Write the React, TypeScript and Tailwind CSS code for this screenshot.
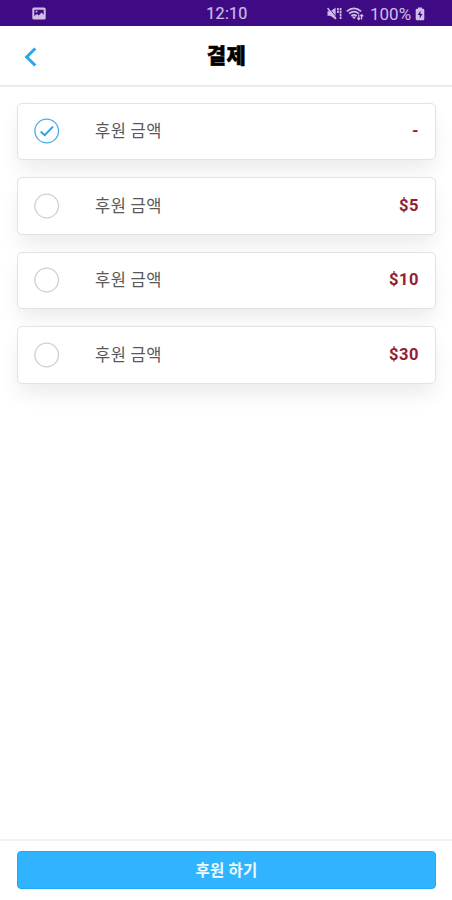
type Option = { id: number; amount: string; selected?: boolean };

const options: Option[] = [
  { id: 1, amount: '-', selected: true },
  { id: 2, amount: '$5' },
  { id: 3, amount: '$10' },
  { id: 4, amount: '$30' },
];

function StatusBar() {
  return (
    <div className="grid h-[25.5px] shrink-0 grid-cols-3 items-center bg-[#3f0b85] pt-[2px] text-[#cfbde6]">
      <svg className="ml-[32px]" width="14" height="13" viewBox="0 0 14 13">
        <rect x="0.3" y="0.5" width="13.4" height="12" rx="1.5" fill="currentColor" />
        <path d="M2.3 2.8h9.4v4.9L9.5 5.6 6.8 8.4 5 6.9 2.3 9Z" fill="#3f0b85" />
        <circle cx="4.5" cy="4.6" r="1" fill="currentColor" />
      </svg>
      <span className="pl-[2px] text-center font-['Roboto',sans-serif] text-[16px] leading-[22px] tracking-[0.3px] [-webkit-text-stroke:0.2px_#cfbde6]">12:10</span>
      <div className="flex items-center justify-end pr-[27px]">
        <svg width="15" height="13" viewBox="0 0 15 13">
          <path d="M0.5 4.3h2.8L8.6 0.8v11.4L3.3 8.7H0.5Z" fill="currentColor" />
          <path d="M1.8 0.8 10 11" stroke="#3f0b85" strokeWidth="0.9" />
          <path d="M0.5 1 9 12" stroke="currentColor" strokeWidth="1.5" />
          <path d="M10.9 1v5M13.6 1v11" stroke="currentColor" strokeWidth="1.7" strokeDasharray="2.4 0.6" />
        </svg>
        <svg className="ml-[4px]" width="18" height="14" viewBox="0 0 18 14" fill="none" stroke="currentColor" strokeWidth="1.7">
          <path d="M0.8 4.4Q8 -1.7 15.2 4.4M3.1 6.7Q8 2.5 12.9 6.7M5.3 9Q8 6.8 10.7 9" />
          <path d="M5.8 9.4h4.4L8 12.2Z" fill="currentColor" stroke="none" />
          <path d="M12.8 7.5v5M11.2 10.8l1.6 1.8 1.5-1.7M15.6 12.5v-5M14.2 9.2l1.4-1.6 1.7 1.6" strokeWidth="1.2" />
        </svg>
        <span className="ml-[6px] w-[42px] whitespace-nowrap font-['Roboto',sans-serif] text-[17px] leading-[22px] tracking-[0px]">100%</span>
        <svg className="ml-[3px]" width="10" height="14" viewBox="0 0 10 14">
          <path d="M3 0.5h4v1.2h1q1.3 0 1.3 1.3v9q0 1.3-1.3 1.3H2Q0.7 13.3 0.7 12V3Q0.7 1.7 2 1.7h1Z" fill="currentColor" />
          <path d="M5.6 3.5 2.7 8h2v3.5L7.5 7h-2Z" fill="#3f0b85" />
        </svg>
      </div>
    </div>
  );
}

function Header() {
  return (
    <header className="grid h-[61px] shrink-0 grid-cols-3 items-center border-b-2 border-[#ececec]">
      <svg className="ml-[24px] mt-[3px]" width="14" height="20" viewBox="0 0 14 20" fill="none" stroke="#2aa5ee" strokeWidth="3">
        <path d="M11.3 1.5 2.7 10l8.6 8.5" />
      </svg>
      <h1 className="-mt-[2px] pl-[1px] text-center font-['Noto_Sans_CJK_KR',sans-serif] text-[21px] font-black leading-[30px] tracking-[0.3px] text-black [-webkit-text-stroke:0.5px_black]">
        결제
      </h1>
    </header>
  );
}

function OptionCard({ option }: { option: Option }) {
  return (
    <div className="flex h-[57.5px] shrink-0 items-center rounded-[5px] border-[1.5px] border-[#e2e2e2] bg-white px-[16px] shadow-[0_12px_20px_-2px_rgba(0,0,0,0.08)]">
      <svg width="26" height="26" viewBox="0 0 26 26" fill="none">
        <circle cx="12.7" cy="13" r="11.8" stroke={option.selected ? '#46aeea' : '#cfcfcf'} strokeWidth="1.3" />
        {option.selected && <path d="M6.7 13.5 10.7 17.2 19 8.6" stroke="#2c9fe6" strokeWidth="1.9" />}
      </svg>
      <span className="-mt-[2px] ml-[35px] font-['Noto_Sans_CJK_KR',sans-serif] text-[16.5px] leading-[24px] tracking-[0.5px] text-[#585858]">후원 금액</span>
      <span className="ml-auto font-['Roboto',sans-serif] text-[16.5px] font-bold leading-[24px] tracking-[0.5px] text-[#961c32]">
        {option.amount}
      </span>
    </div>
  );
}

export default function App() {
  return (
    <div className="flex h-[900px] w-[452px] flex-col overflow-hidden bg-white">
      <StatusBar />
      <Header />
      <main className="flex grow flex-col gap-[17px] pl-[17px] pr-[16px] pt-[16px]">
        {options.map((option) => (
          <OptionCard key={option.id} option={option} />
        ))}
      </main>
      <footer className="h-[61px] shrink-0 border-t-2 border-[#f2f2f2] pl-[17px] pr-[16px] pt-[10px]">
        <button className="flex h-[38px] w-full items-center justify-center rounded-[4px] border border-[#1eaaf8] bg-[#30b4ff] font-['Noto_Sans_CJK_KR',sans-serif] text-[15.5px] font-bold tracking-[0.3px] text-[#effaff]">
          후원 하기
        </button>
      </footer>
    </div>
  );
}
